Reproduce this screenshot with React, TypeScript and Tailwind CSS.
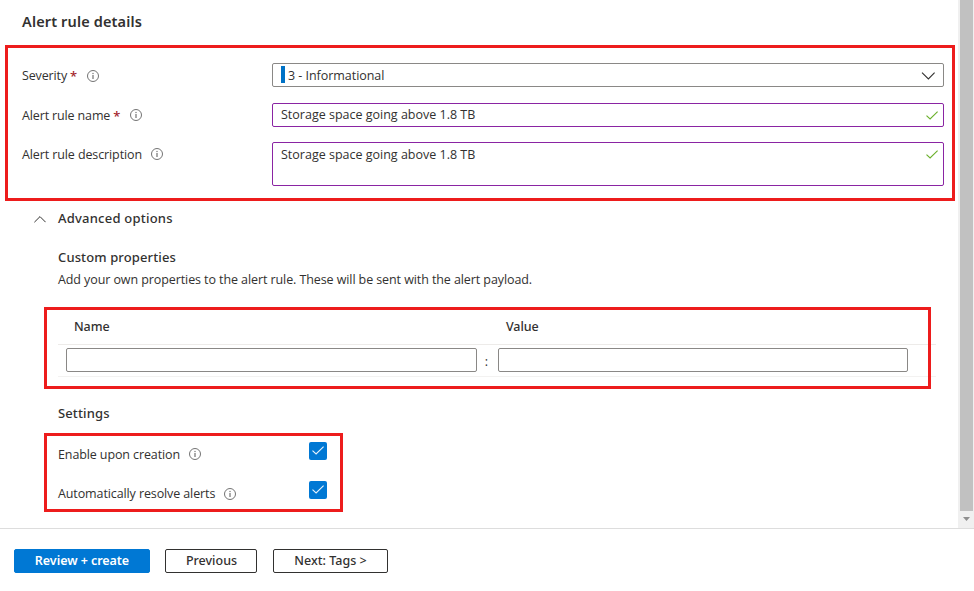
import type { ReactNode } from "react";

function InfoIcon() {
  return (
    <svg width="12" height="12" viewBox="0 0 12 12" fill="none" className="shrink-0">
      <circle cx="6" cy="6" r="5.5" stroke="#737373" />
      <rect x="5.4" y="2.9" width="1.2" height="1.2" fill="#737373" />
      <rect x="5.4" y="5" width="1.2" height="4" fill="#737373" />
    </svg>
  );
}

function Tick({ color }: { color: string }) {
  return (
    <svg width="12" height="9" viewBox="0 0 12 9" fill="none" className="shrink-0">
      <path d="M0.5 4.6 L4.1 8 L11.6 0.7" stroke={color} strokeWidth="1.15" />
    </svg>
  );
}

function Highlight({ className }: { className: string }) {
  return <div className={`pointer-events-none absolute border-3 border-[#ed1c1c] ${className}`} />;
}

function Label({ children, required, iconOffset }: { children: ReactNode; required?: boolean; iconOffset: string }) {
  return (
    <div className="mt-[3px] flex h-5 w-[250px] shrink-0 items-start">
      <span className={required ? "tracking-[-0.14px]" : "tracking-[-0.11px]"}>{children}</span>
      {required && (
        <span className="ml-[3px] mr-[1px] font-['Noto_Sans'] text-[13px] font-medium text-[#a4262c]">*</span>
      )}
      <span className={`ml-[9px] ${iconOffset}`}>
        <InfoIcon />
      </span>
    </div>
  );
}

function Setting({ children, iconOffset }: { children: ReactNode; iconOffset: string }) {
  return (
    <div className="flex h-[18px] w-[269px] items-start justify-between">
      <div className="flex items-start">
        <span className="pt-[3px] tracking-[-0.11px]">{children}</span>
        <span className={`ml-[9px] ${iconOffset}`}>
          <InfoIcon />
        </span>
      </div>
      <div className="flex size-[18px] justify-center rounded-[2px] bg-[#0078d4] pt-[4px]">
        <Tick color="#e6f2fb" />
      </div>
    </div>
  );
}

export default function App() {
  return (
    <div className="flex h-[591px] w-[974px] flex-col overflow-hidden bg-white font-['Open_Sans','Noto_Sans',sans-serif] text-[12.5px] leading-5 text-[#323130]">
      <div className="flex h-[528px]">
        <main className="w-[958px]">
          <h1 className="ml-[22px] mt-[11px] h-[34px] font-['Noto_Sans'] text-[14.5px] font-[560] tracking-[0.14px]">
            Alert rule details
          </h1>

          <section className="relative h-[156px] pl-[22px] pt-[18px]">
            <Highlight className="inset-y-0 left-[5px] w-[950px]" />
            <div className="flex h-[40px]">
              <Label required iconOffset="mt-[4px]">Severity</Label>
              <div className="flex h-6 w-[672px] items-start rounded-[2px] border border-[#8a8886] pl-2 pr-[8px] pt-[2px]">
                <span className="h-[17px] w-1 bg-[#0072c6]" />
                <span className="ml-[3px] flex-1 tracking-[-0.04px]">3 - Informational</span>
                <svg width="14" height="8" viewBox="0 0 14 8" fill="none" className="mt-[6px]">
                  <path d="M1 0.7 L7.4 7 L13.6 0.7" stroke="#323130" strokeWidth="1.1" />
                </svg>
              </div>
            </div>
            <div className="flex h-[39px]">
              <Label required iconOffset="mt-[3px]">Alert rule name</Label>
              <div className="flex h-6 w-[672px] items-start justify-between rounded-[2px] border border-[#8a24a3] pl-2 pr-[5px]">
                <span className="pt-[1px]">Storage space going above 1.8 TB</span>
                <span className="pt-[7px]"><Tick color="#6bb02c" /></span>
              </div>
            </div>
            <div className="flex">
              <Label iconOffset="mt-[3px]">Alert rule description</Label>
              <div className="flex h-[44px] w-[672px] items-start justify-between rounded-[2px] border border-[#8a24a3] pl-2 pr-[5px]">
                <span className="pt-[2px]">Storage space going above 1.8 TB</span>
                <span className="pt-[7px]"><Tick color="#6bb02c" /></span>
              </div>
            </div>
          </section>

          <div className="mt-[7px] flex h-[39px] items-start pl-[34px] font-['Noto_Sans'] text-[13px] font-[550]">
            <svg width="12" height="7" viewBox="0 0 12 7" fill="none" className="mt-[8px]">
              <path d="M0.4 6.2 L6 0.6 L11.6 6.2" stroke="#323130" />
            </svg>
            <h2 className="ml-3 tracking-[0.22px]">Advanced options</h2>
          </div>
          <div className="h-[60px] pl-[58px]">
            <h3 className="h-[23px] font-['Noto_Sans'] text-[13px] font-[550] tracking-[0.12px]">Custom properties</h3>
            <p className="tracking-[-0.09px]">
              Add your own properties to the alert rule. These will be sent with the alert payload.
            </p>
          </div>

          <section className="relative h-[82px] pl-[58px]">
            <div className="w-[878px] pt-[9px]">
              <div className="flex h-[29px] border-b border-[#edebe9] pl-4 pt-[1px] font-['Noto_Sans'] font-medium">
                <span className="w-[432px] tracking-[-0.1px]">Name</span>
                <span className="tracking-[-0.1px]">Value</span>
              </div>
              <div className="flex h-[32px] items-start border-b border-[#f3f2f1] pl-2 pt-[3px]">
                <div className="h-6 w-[411px] rounded-[2px] border border-[#8a8886]" />
                <span className="w-[21px] pr-[2px] pt-[4px] text-center">:</span>
                <div className="h-6 w-[410px] rounded-[2px] border border-[#8a8886]" />
              </div>
            </div>
            <Highlight className="inset-y-0 left-[44px] w-[887px]" />
          </section>

          <h3 className="mt-[14px] h-[30px] pl-[58px] font-['Noto_Sans'] text-[13px] font-[550] tracking-[0.12px]">
            Settings
          </h3>
          <section className="relative flex h-[79px] flex-col gap-[21px] pl-[58px] pt-[9px]">
            <Highlight className="inset-y-0 left-[44px] w-[299px]" />
            <Setting iconOffset="mt-[6px]">Enable upon creation</Setting>
            <Setting iconOffset="mt-[7px]">Automatically resolve alerts</Setting>
          </section>
        </main>

        <div className="flex w-4 flex-col items-center bg-[#f0f0f0]">
          <div className="h-[511px] w-[13px] bg-[#c1c1c1]" />
          <svg width="7" height="4" viewBox="0 0 7 4" className="mt-[6px]">
            <path d="M0 0 H7 L3.5 4 Z" fill="#8f8f8f" />
          </svg>
        </div>
      </div>

      <footer className="flex h-[63px] items-start border-t border-[#dddddd] pl-[14px] pt-5 font-['Noto_Sans'] font-medium leading-[22px]">
        <button className="h-6 w-[136px] rounded-[2px] border border-[#0078d4] bg-[#0078d4] font-semibold tracking-[-0.05px] text-white">
          Review + create
        </button>
        <button className="ml-[15px] h-6 w-[92px] rounded-[2px] border border-[#323130] pl-[1px]">Previous</button>
        <button className="ml-4 h-6 w-[115px] rounded-[2px] border border-[#323130]">Next: Tags &gt;</button>
      </footer>
    </div>
  );
}
